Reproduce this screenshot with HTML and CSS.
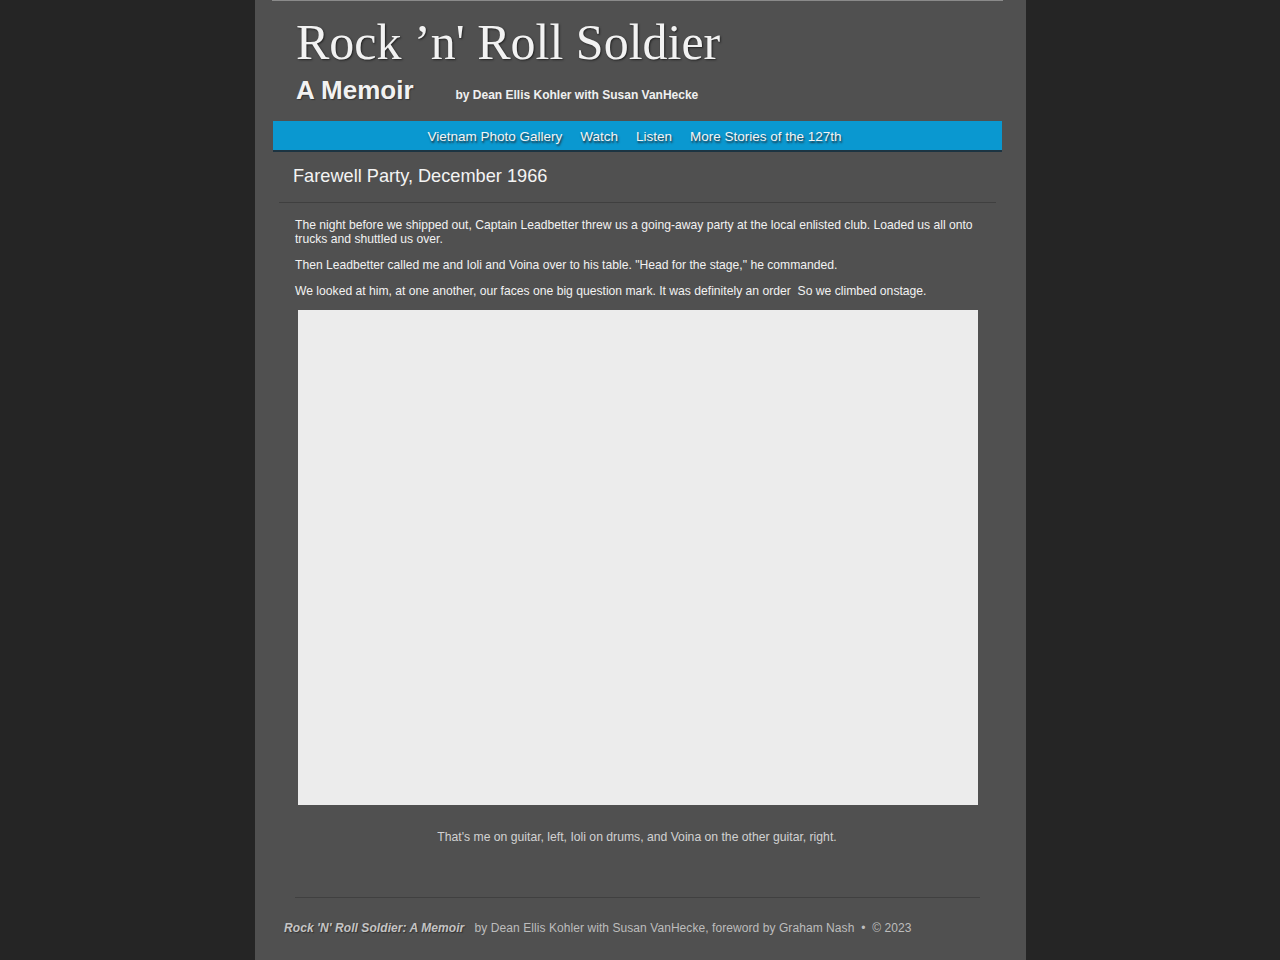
FILE: index.html
```html
<!DOCTYPE html>
<html>
<head>
<meta charset="utf-8">
<link rel="stylesheet" href="styles.css">
</head>
<body>
<div class="page">
  <header class="masthead">
    <h1 class="title">Rock ’n' Roll Soldier</h1>
    <div class="subline">
      <span class="memoir">A Memoir</span>
      <span class="byline">by Dean Ellis Kohler with Susan VanHecke</span>
    </div>
  </header>
  <nav class="nav">
    <a href="#">Vietnam Photo Gallery</a>
    <a href="#">Watch</a>
    <a href="#">Listen</a>
    <a href="#">More Stories of the 127th</a>
  </nav>
  <main class="content">
    <h2 class="heading">Farewell Party, December 1966</h2>
    <div class="article">
      <p>The night before we shipped out, Captain Leadbetter threw us a going-away party at the local enlisted club. Loaded us all onto trucks and shuttled us over.</p>
      <p>Then Leadbetter called me and Ioli and Voina over to his table. "Head for the stage," he commanded.</p>
      <p>We looked at him, at one another, our faces one big question mark. It was definitely an order&nbsp; So we climbed onstage.</p>
      <div class="photo"></div>
      <p class="caption">That's me on guitar, left, Ioli on drums, and Voina on the other guitar, right.</p>
    </div>
  </main>
  <footer class="footer">
    <p><em class="book">Rock 'N' Roll Soldier: A Memoir</em>&nbsp;&nbsp; by Dean Ellis Kohler with Susan VanHecke, foreword by Graham Nash &nbsp;•&nbsp; © 2023</p>
  </footer>
</div>
</body>
</html>
```

FILE: styles.css
```css
html, body {
  margin: 0;
  padding: 0;
}
body {
  background: #252525;
  font-family: "Liberation Sans", Arial, sans-serif;
  color: #eeeeee;
  min-height: 960px;
}
.page {
  width: 771px;
  margin-left: 255px;
  background: #505050;
  min-height: 960px;
  box-sizing: border-box;
}
.masthead {
  margin: 0 23px 0 17px;
  border-top: 1px solid #8a8a8a;
  padding: 13px 0 0 24px;
  height: 119px;
  box-sizing: border-box;
}
.title {
  margin: 0;
  font-family: "Liberation Serif", "Times New Roman", serif;
  font-weight: normal;
  font-size: 50px;
  line-height: 56px;
  color: #f2f2f2;
  text-shadow: 1px 1px 2px #222;
}
.subline {
  display: flex;
  align-items: baseline;
  margin-top: 3px;
}
.memoir {
  font-weight: bold;
  font-size: 26px;
  line-height: 34px;
  color: #f2f2f2;
  text-shadow: 1px 1px 1px #333;
}
.byline {
  margin-left: 42px;
  font-weight: bold;
  font-size: 12px;
  color: #f0f0f0;
}
.nav {
  margin: 2px 24px 0 18px;
  height: 29px;
  background: #0a98d0;
  border-bottom: 2px solid #1c3442;
  display: flex;
  justify-content: center;
  align-items: center;
  gap: 18px;
  padding-right: 6px;
}
.nav a {
  color: #f4f4f4;
  text-decoration: none;
  font-size: 13.5px;
  text-shadow: 1px 2px 2px #1c3442;
  position: relative;
  top: 1px;
}
.content {
  padding: 0 30px 0 24px;
}
.heading {
  margin: 0;
  padding: 14px 0 15px 14px;
  font-weight: normal;
  font-size: 18.2px;
  line-height: 21px;
  color: #f4f4f4;
  border-bottom: 1px solid #3f3f3f;
}
.article {
  padding: 15px 0 0 16px;
}
.article p {
  margin: 0 0 12px 0;
  font-size: 12.15px;
  line-height: 14px;
  color: #f2f2f2;
}
.photo {
  width: 680px;
  height: 495px;
  background: #ececec;
  margin: 0 0 0 3px;
}
.article p.caption {
  font-size: 12.2px;
  color: #d2d2d2;
  text-align: center;
  margin: 25px 0 0 0;
  padding-right: 17px;
}
.footer {
  margin: 53px 46px 0 40px;
  border-top: 1px solid #404040;
  padding: 23px 0 0 0;
}
.footer p {
  margin: 0 0 0 -11px;
  font-size: 12px;
  letter-spacing: 0.07px;
  color: #bdbdbd;
  white-space: nowrap;
}
.book {
  font-weight: bold;
  color: #c4c4c4;
  text-shadow: 1px 1px 1px #333;
}
```
